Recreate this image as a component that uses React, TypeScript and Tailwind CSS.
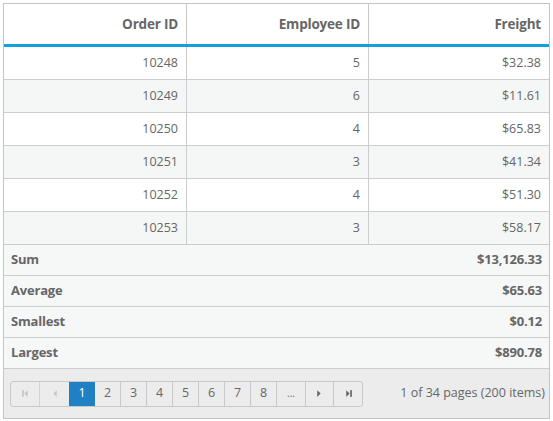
const rows = [
  { id: 10248, emp: 5, freight: '$32.38' },
  { id: 10249, emp: 6, freight: '$11.61' },
  { id: 10250, emp: 4, freight: '$65.83' },
  { id: 10251, emp: 3, freight: '$41.34' },
  { id: 10252, emp: 4, freight: '$51.30' },
  { id: 10253, emp: 3, freight: '$58.17' },
];

const summary = [
  { label: 'Sum', value: '$13,126.33' },
  { label: 'Average', value: '$65.63' },
  { label: 'Smallest', value: '$0.12' },
  { label: 'Largest', value: '$890.78' },
];

const Tri = ({ dir, bar, color }: { dir: 'l' | 'r'; bar?: boolean; color: string }) => (
  <svg width="9" height="9" viewBox="0 0 8 8" fill={color}>
    {dir === 'l' ? (
      <>
        {bar && <rect x="1" y="1" width="1.5" height="6" />}
        <polygon points="6,1 6,7 3,4" />
      </>
    ) : (
      <>
        <polygon points="2,1 2,7 5,4" />
        {bar && <rect x="5.5" y="1" width="1.5" height="6" />}
      </>
    )}
  </svg>
);

export default function App() {
  return (
    <div className="w-[553px] h-[421px] bg-white pt-[3px] pl-[3px]" style={{ fontFamily: '"Open Sans", "Noto Sans", sans-serif' }}>
      <div className="w-[547px] h-[416px] border border-[#c4c4c4] flex flex-col text-[#666]">
        {/* header */}
        <div className="grid grid-cols-[183px_182px_1fr] h-[43px] border-b-[3px] border-[#15a0dd] bg-white">
          {['Order ID', 'Employee ID', 'Freight'].map((h, i) => (
            <div
              key={h}
              className={`flex items-center justify-end pr-[8px] text-[13.5px] font-bold text-[#666] tracking-[-0.2px] ${i < 2 ? 'border-r border-[#c8c8c8]' : ''}`}
            >
              {h}
            </div>
          ))}
        </div>

        {/* rows */}
        {rows.map((r, idx) => (
          <div
            key={r.id}
            className={`grid grid-cols-[183px_182px_1fr] h-[33px] border-b border-[#cdcdcd] ${idx % 2 === 1 ? 'bg-[#f5f6f6]' : 'bg-white'}`}
          >
            <div className="flex items-center justify-end pr-[8px] text-[12.5px] border-r border-[#cdcdcd]">{r.id}</div>
            <div className="flex items-center justify-end pr-[8px] text-[12.5px] border-r border-[#cdcdcd]">{r.emp}</div>
            <div className="flex items-center justify-end pr-[8px] text-[12.5px]">{r.freight}</div>
          </div>
        ))}

        {/* summary */}
        {summary.map((s) => (
          <div key={s.label} className="flex items-center justify-between h-[31px] px-[7px] border-b border-[#cdcdcd] bg-[#f6f7f7] text-[13px] font-bold tracking-[-0.2px]">
            <span>{s.label}</span>
            <span>{s.value}</span>
          </div>
        ))}

        {/* pager */}
        <div className="flex-1 bg-[#ececec] flex items-center justify-between pl-[6px] pr-[4px]">
          <div className="flex h-[26px] border border-[#c8c8c8] rounded-[3px] bg-[#ececec] text-[12.5px] overflow-hidden">
            <div className="w-[29px] flex items-center justify-center border-r border-[#d4d4d4]"><Tri dir="l" bar color="#c6c6c6" /></div>
            <div className="w-[29px] flex items-center justify-center"><Tri dir="l" color="#c6c6c6" /></div>
            <div className="w-[26px] flex items-center justify-center bg-[#1f80c4] text-white">1</div>
            {['2', '3', '4', '5', '6', '7', '8'].map((n) => (
              <div key={n} className="w-[26px] flex items-center justify-center border-r border-[#c8c8c8] text-[#666]">{n}</div>
            ))}
            <div className="w-[29px] flex items-center justify-center border-r border-[#c8c8c8] text-[#666] text-[10px]">...</div>
            <div className="w-[28px] flex items-center justify-center border-r border-[#c8c8c8]"><Tri dir="r" color="#666" /></div>
            <div className="w-[28px] flex items-center justify-center"><Tri dir="r" bar color="#666" /></div>
          </div>
          <span className="text-[12.5px] text-[#666]">1 of 34 pages (200 items)</span>
        </div>
      </div>
    </div>
  );
}
